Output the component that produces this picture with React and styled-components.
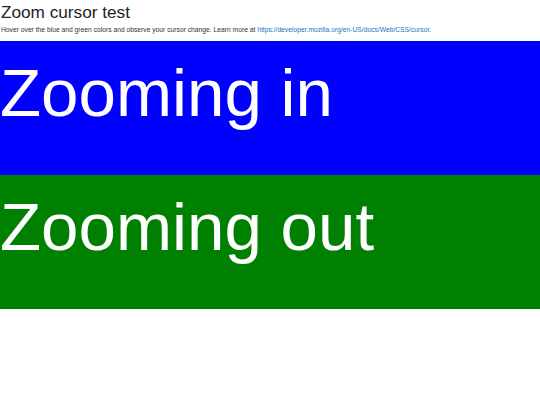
import React from 'react';
import styled, { createGlobalStyle } from 'styled-components';

const Global = createGlobalStyle`
  html, body {
    margin: 0;
    padding: 0;
    background: #fff;
    font-family: "Liberation Sans", Arial, sans-serif;
  }
`;

const Header = styled.header`
  padding: 2px 0 0 1px;
  height: 41px;
  box-sizing: border-box;
`;

const Title = styled.h1`
  margin: 0;
  font-size: 17.2px;
  font-weight: normal;
  line-height: 20px;
  color: #222;
`;

const Note = styled.p`
  margin: 3px 0 0;
  font-size: 6.72px;
  line-height: 9px;
  color: #333;

  a {
    color: #1a73c9;
    text-decoration: none;
  }
`;

const Zone = styled.div`
  height: 134px;
  box-sizing: border-box;
  padding-top: 13px;
  background: ${(p) => p.$bg};
  color: #fff;
  font-size: 67.3px;
  line-height: 77px;
  white-space: nowrap;
  overflow: hidden;
  cursor: ${(p) => p.$cursor};
`;

export default function App() {
  return (
    <>
      <Global />
      <Header>
        <Title>Zoom cursor test</Title>
        <Note>
          Hover over the blue and green colors and observe your cursor change. Learn more at{' '}
          <a href="https://developer.mozilla.org/en-US/docs/Web/CSS/cursor">
            https://developer.mozilla.org/en-US/docs/Web/CSS/cursor
          </a>
          .
        </Note>
      </Header>
      <Zone $bg="#0000ff" $cursor="zoom-in">Zooming in</Zone>
      <Zone $bg="#008000" $cursor="zoom-out">Zooming out</Zone>
    </>
  );
}
